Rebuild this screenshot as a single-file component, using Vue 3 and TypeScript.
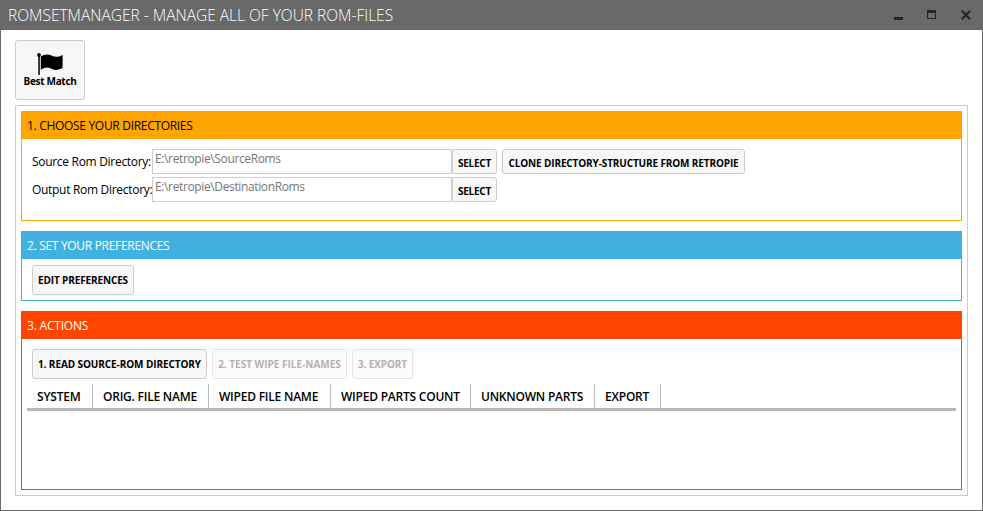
<script setup lang="ts">
import { ref } from 'vue'

interface Directory {
  label: string
  path: string
  key: string
}

const directories = ref<Directory[]>([
  { key: 'source', label: 'Source Rom Directory:', path: 'E:\\retropie\\SourceRoms' },
  { key: 'output', label: 'Output Rom Directory:', path: 'E:\\retropie\\DestinationRoms' },
])

const actions = [
  { key: 'read', label: '1. READ SOURCE-ROM DIRECTORY', enabled: true },
  { key: 'wipe', label: '2. TEST WIPE FILE-NAMES', enabled: false },
  { key: 'export', label: '3. EXPORT', enabled: false },
]

const columns = [
  { key: 'system', label: 'SYSTEM' },
  { key: 'orig', label: 'ORIG. FILE NAME' },
  { key: 'wiped', label: 'WIPED FILE NAME' },
  { key: 'count', label: 'WIPED PARTS COUNT' },
  { key: 'unknown', label: 'UNKNOWN PARTS' },
  { key: 'exp', label: 'EXPORT' },
]
</script>

<template>
  <div class="window">
    <header class="titlebar">
      <h1>ROMSETMANAGER - MANAGE ALL OF YOUR ROM-FILES</h1>
      <div class="controls">
        <svg class="min" width="9" height="10" viewBox="0 0 9 10"><path d="M0 7h9v3H0z" fill="#262626" /></svg>
        <svg class="max" width="9" height="9" viewBox="0 0 9 9"><path d="M0 0h9v9H0zM1 3v5h7V3z" fill="#262626" fill-rule="evenodd" /></svg>
        <svg width="10" height="10" viewBox="0 0 10 10"><path d="M.8.8l8.400 8.400M9.200.8L.8 9.200" stroke="#262626" stroke-width="2.200" /></svg>
      </div>
    </header>

    <main class="content">
      <button class="btn match">
        <svg class="flag" width="26" height="23" viewBox="0 0 26 23">
          <circle cx="2" cy="2" r="1.900" />
          <path d="M1.300 2h1.500v20H1.300z" />
          <path d="M3.800 3.800C7 1.200 11 .9 14.500 2.600S21 4.400 25.600 2v12.800c-4 2.500-7.600 2.700-11.100.9S8 14.300 3.800 16.700z" />
        </svg>
        <span class="t-match">Best Match</span>
      </button>

      <div class="workspace">
        <section class="panel orange">
          <h2>1. CHOOSE YOUR DIRECTORIES</h2>
          <div class="dirs">
            <div v-for="d in directories" :key="d.key" class="dir">
              <label>{{ d.label }}</label>
              <div class="field">{{ d.path }}</div>
              <button class="btn"><span class="t-select">SELECT</span></button>
              <button v-if="d.key === 'source'" class="btn clone"><span class="t-clone">CLONE DIRECTORY-STRUCTURE FROM RETROPIE</span></button>
            </div>
          </div>
        </section>

        <section class="panel blue">
          <h2>2. SET YOUR PREFERENCES</h2>
          <div class="toolbar prefs">
            <button class="btn edit"><span class="t-edit">EDIT PREFERENCES</span></button>
          </div>
        </section>

        <section class="panel red">
          <h2>3. ACTIONS</h2>
          <div class="toolbar acts">
            <button v-for="a in actions" :key="a.key" class="btn" :class="'b-' + a.key" :disabled="!a.enabled">
              <span :class="'t-' + a.key">{{ a.label }}</span>
            </button>
          </div>
          <div class="grid-head">
            <div v-for="c in columns" :key="c.key" class="col" :class="'c-' + c.key">{{ c.label }}</div>
          </div>
        </section>
      </div>
    </main>
  </div>
</template>

<style>
body { margin: 0; background: #fff; }
</style>

<style scoped>
.window {
  box-sizing: border-box;
  width: 983px;
  height: 511px;
  border: 1px solid #696969;
  border-top: 0;
  background: #fff;
  font-family: "Open Sans", "Noto Sans", sans-serif;
  font-size: 12px;
  color: #000;
  overflow: hidden;
  white-space: nowrap;
}
.titlebar {
  height: 30px;
  margin: 0 -1px;
  padding: 0 12px 0 8px;
  background: #696969;
  display: flex;
  justify-content: space-between;
  align-items: flex-start;
}
h1 { margin: 0; font-size: 15.5px; font-weight: 300; color: #fff; line-height: 31px; }
.controls { display: flex; padding-top: 10px; align-items: flex-start; }
.min { margin-right: 24px; }
.max { margin-right: 25px; }
.content { padding: 10px 14px; }
.btn {
  box-sizing: border-box;
  margin: 0;
  padding: 0;
  border: 1px solid #ccc;
  border-radius: 3px;
  background: #f7f7f7;
  color: #000;
  font-family: inherit;
  font-size: 10px;
  font-weight: 700;
  line-height: 14px;
  display: flex;
  align-items: center;
  justify-content: center;
}
.btn:disabled { color: #b2b2b2; border-color: #e3e3e3; background: #fbfbfb; }
.match { width: 70px; height: 60px; flex-direction: column; justify-content: flex-start; padding-top: 12px; }
.flag { display: block; margin-bottom: -2px; }
.t-match { letter-spacing: -0.3px; }
.workspace {
  box-sizing: border-box;
  width: 953px;
  height: 391px;
  margin-top: 5px;
  padding: 5px;
  border: 1px solid #ccc;
  display: flex;
  flex-direction: column;
  gap: 10px;
}
.panel { box-sizing: border-box; border: 1px solid; }
.panel h2 { margin: 0; height: 27px; padding-left: 5px; line-height: 28px; font-size: 12px; font-weight: 400; letter-spacing: -0.31px; color: #fff; }
.orange { height: 110px; border-color: #ffa500; }
.panel.orange h2 { background: #ffa500; color: #000; }
.blue { height: 70px; border-color: #41b1e1; }
.blue h2 { background: #41b1e1; }
.red { flex: 1; border-color: #ff4500; }
.red h2 { background: #ff4500; letter-spacing: -0.2px; }
.dirs { padding: 10px; display: flex; flex-direction: column; gap: 3px; }
.dir { display: flex; height: 25px; }
.dir label { width: 120px; line-height: 25px; letter-spacing: -0.3px; }
.field { box-sizing: border-box; width: 300px; border: 1px solid #ccc; padding-left: 2px; line-height: 18px; letter-spacing: -0.37px; color: #767676; }
.dir .btn { width: 45px; padding-top: 3px; }
.dir .clone { width: 243px; margin-left: 5px; }
.t-select { letter-spacing: -0.25px; }
.t-clone, .t-edit, .t-export { letter-spacing: -0.13px; }
.t-read { letter-spacing: -0.09px; }
.toolbar { display: flex; gap: 5px; padding: 6px 10px; }
.toolbar .btn { height: 30px; }
.edit { width: 102px; }
.acts { padding: 10px 10px 5px; }
.b-read { width: 175px; }
.b-wipe { width: 135px; }
.b-export { width: 61px; }
.grid-head { display: flex; margin: 0 5px; border-bottom: 3px solid #b8b8b8; height: 24px; }
.col { box-sizing: border-box; border-right: 1px solid #b8b8b8; padding-left: 10px; line-height: 25px; font-weight: 600; letter-spacing: -0.22px; }
.c-system { width: 66px; }
.c-orig { width: 116px; }
.c-wiped { width: 122px; }
.c-count { width: 140px; }
.c-unknown { width: 124px; }
.c-exp { width: 66px; }
</style>
